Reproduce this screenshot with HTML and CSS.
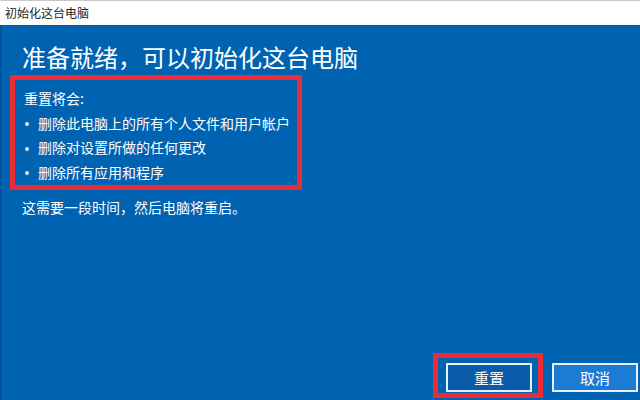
FILE: index.html
```html
<!DOCTYPE html>
<html lang="zh-CN">
<head>
<meta charset="utf-8">
<title>初始化这台电脑</title>
<link rel="stylesheet" href="styles.css">
</head>
<body>
<div class="window">
  <div class="titlebar">初始化这台电脑</div>
  <div class="content">
    <h1 class="heading">准备就绪，可以初始化这台电脑</h1>
    <div class="mark-box">
      <div class="intro">重置将会:</div>
      <ul class="list">
        <li class="item"><span class="dot"></span>删除此电脑上的所有个人文件和用户帐户</li>
        <li class="item"><span class="dot"></span>删除对设置所做的任何更改</li>
        <li class="item"><span class="dot"></span>删除所有应用和程序</li>
      </ul>
    </div>
    <p class="note">这需要一段时间，然后电脑将重启。</p>
    <div class="footer">
      <div class="mark-btn">
        <button class="btn btn-primary">重置</button>
      </div>
      <button class="btn btn-secondary">取消</button>
    </div>
  </div>
</div>
</body>
</html>
```
FILE: styles.css
```css
html, body {
  margin: 0;
  padding: 0;
}
body {
  width: 640px;
  height: 400px;
  overflow: hidden;
  font-family: "Noto Sans CJK SC", "Noto Sans", sans-serif;
}
.window {
  width: 640px;
  height: 400px;
  display: flex;
  flex-direction: column;
}
.titlebar {
  height: 24px;
  border-top: 1px solid #c8c8c8;
  background: #ffffff;
  color: #1e1e1e;
  font-size: 12px;
  line-height: 23px;
  padding-left: 5px;
}
.content {
  flex: 1;
  background: #0063b1;
  border-left: 2px solid #00529a;
  padding-left: 8px;
  display: flex;
  flex-direction: column;
  color: #ffffff;
}
.heading {
  margin: 16px 0 2px 12px;
  font-size: 24px;
  font-weight: normal;
  line-height: 32px;
  height: 32px;
}
.mark-box {
  width: 292px;
  box-sizing: border-box;
  border: 5px solid #ec2d38;
  padding: 6px 0 1px 9px;
  font-size: 14px;
  line-height: 24.5px;
}
.intro {
  height: 24.5px;
}
.list {
  list-style: none;
  margin: 0;
  padding: 0;
}
.item {
  display: flex;
  align-items: center;
  height: 24.5px;
  white-space: nowrap;
}
.dot {
  width: 4px;
  height: 4px;
  border-radius: 50%;
  background: #dfe9f5;
  margin: 3px 9px 0 1px;
  flex: none;
}
.note {
  margin: 5px 0 0 12px;
  font-size: 14px;
  line-height: 24px;
}
.footer {
  margin-top: auto;
  margin-bottom: 2px;
  display: flex;
  justify-content: flex-end;
  align-items: flex-end;
  gap: 9px;
  padding-right: 2px;
}
.mark-btn {
  border: 5px solid #ec2d38;
  padding: 5px 6px 1px 8px;
}
.btn {
  width: 86px;
  height: 29px;
  box-sizing: border-box;
  border: 2px solid #e8f1fb;
  color: #ffffff;
  font-family: "Noto Sans CJK SC", "Noto Sans", sans-serif;
  font-size: 15px;
  line-height: 23px;
  padding: 0;
  display: block;
}
.btn-primary {
  background: #0a5cab;
}
.btn-secondary {
  background: #1c7bd4;
  margin-bottom: 6px;
}
```
